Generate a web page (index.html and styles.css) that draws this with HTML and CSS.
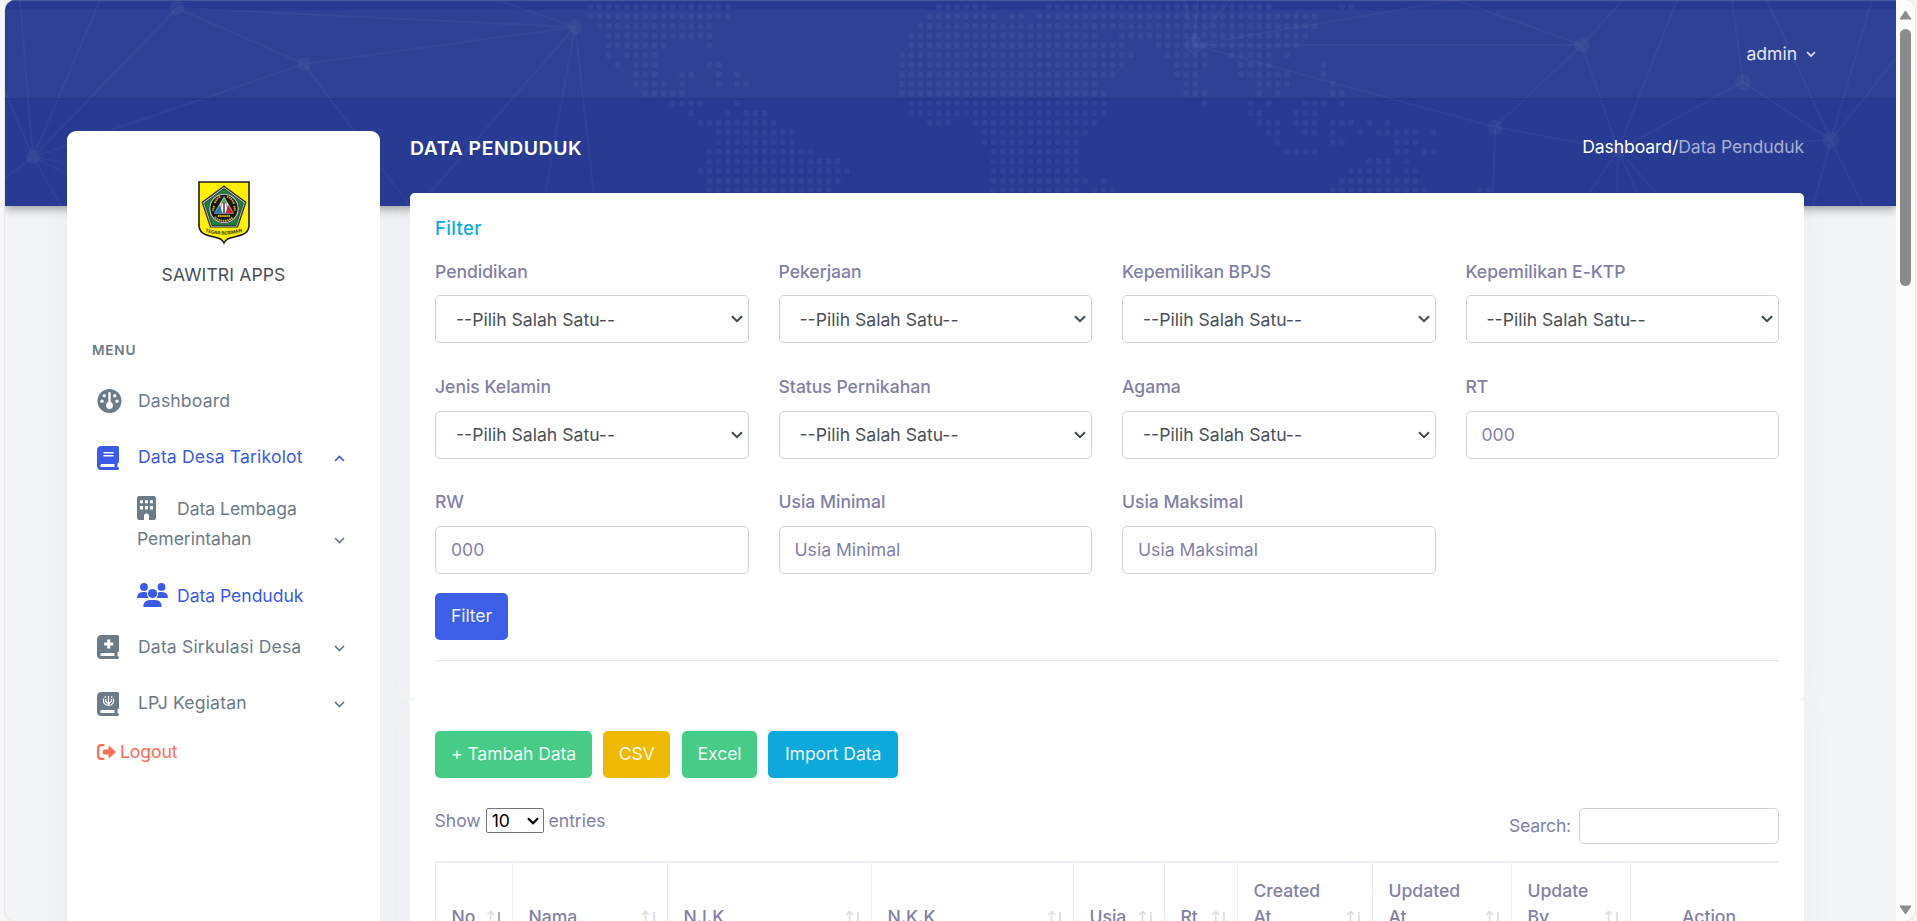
FILE: index.html
```html
<!DOCTYPE html>
<html lang="id">
<head>
<meta charset="utf-8">
<title>Data Penduduk</title>
<link rel="stylesheet" href="styles.css">
</head>
<body>
<div class="window">
<div class="page">
  <div class="banner">
    <svg class="banner-art" width="1891" height="206" viewBox="5 0 1891 206">
      <g class="net">
        <path d="M177 8L304 64L575 27L177 8L33 157L304 64L410 206M20 0L33 157L100 0M5 92L33 157L5 178M33 157L61 206M33 157L100 135M33 157L100 190M33 157L120 172M497 0L575 27L428 195M575 27L545 195M575 27L594 195M1185 0L1194 45L1198 0M1194 45L1230 0M1194 45L1456 0L1582 45H1194L1495 127L1582 45L1623 0M1582 45L1618 150L1495 127L1493 195M1732 0L1743 82L1618 150L1677 0M1743 82L1831 140L1618 150L1588 195M1618 150L1617 195M1618 150L1638 195M1618 150L1658 195M1767 0L1831 140L1872 0M1896 58L1831 140L1813 206M1831 140L1863 206"/>
        <g class="nodes"><circle cx="177" cy="8" r="7.500"/><circle cx="304.500" cy="64" r="7"/><circle cx="575" cy="27" r="7.500"/><circle cx="33" cy="157" r="7"/><circle cx="1194" cy="45" r="9"/><circle cx="1582" cy="45" r="7.500"/><circle cx="1495" cy="127" r="7.500"/><circle cx="1743" cy="82" r="8"/><circle cx="1618" cy="150" r="7"/><circle cx="1831" cy="140" r="8.500"/></g>
      </g>
      <path class="map" transform="translate(590.4 6.700) scale(9.165 9.667)" d="M0 0H15.1M38 0H43.1M50 0H74.1M82 0H83.1M0 1H15.1M37 1H44.1M46 1H47.1M49 1H79.1M1 2H13.1M36 2H79.1M2 3H13.1M35 3H55.1M58 3H78.1M2 4H8.1M13 4h.1M35 4H58.1M62 4H77.1M2 5h.1M4 5H7.1M34 5H59.1M63 5H67.1M70 5H74.1M76 5h.1M3 6h.1M5 6H7.1M13 6H14.1M34 6H58.1M64 6H67.1M71 6H74.1M80 6h.1M5 7H7.1M10 7H11.1M14 7h.1M16 7h.1M34 7H57.1M64 7H66.1M71 7H76.1M80 7h.1M5 8H8.1M10 8h.1M14 8h.1M16 8H17.1M34 8H55.1M65 8H66.1M73 8H76.1M81 8h.1M6 9H10.1M34 9H56.1M65 9H67.1M73 9h.1M75 9h.1M81 9H82.1M9 10H12.1M16 10h.1M35 10H56.1M67 10h.1M72 10h.1M74 10h.1M78 10H80.1M82 10h.1M11 11h.1M15 11h.1M17 11H19.1M35 11H56.1M72 11H73.1M77 11H79.1M12 12H20.1M37 12H39.1M42 12H55.1M73 12H75.1M77 12H79.1M81 12H83.1M85 12h.1M87 12h.1M14 13H22.1M43 13H54.1M74 13H75.1M78 13H79.1M81 13h.1M84 13h.1M86 13H90.1M92 13h.1M14 14H22.1M43 14H53.1M75 14h.1M81 14H82.1M88 14H90.1M13 15H24.1M44 15H53.1M76 15H79.1M88 15H89.1M91 15H92.1M13 16H27.1M44 16H53.1M85 16H87.1M89 16h.1M12 17H28.1M44 17H53.1M83 17H87.1M89 17H90.1M13 18H27.1M44 18H54.1M56 18h.1M82 18H90.1M13 19H26.1M44 19H53.1M55 19H57.1M81 19H91.1M97 19H98.1"/>
    </svg>
  </div>
  <header class="topbar">
    <span class="user">admin</span>
    <svg class="caret" width="10" height="7" viewBox="0 0 10 7"><path d="M1 1L5 5L9 1"/></svg>
  </header>
  <div class="layout">
    <aside class="sidebar">
      <svg class="crest" width="52" height="64" viewBox="0 0 52 64">
        <path d="M1 1H51V44C51 52 45 54 38 55.500C31 57 28 58 26 62C24 58 21 57 14 55.500C7 54 1 52 1 44Z" fill="#fff200" stroke="#1c1c16" stroke-width="1.600"/>
        <path d="M26 4.500L48.500 21L40 46.500H12L3.500 21Z" fill="#222"/>
        <path d="M26 6L47 21.500L39 45.500H13L5 21.500Z" fill="#d8ddd0"/>
        <path d="M26 7.500L45.500 22L38 44.500H14L6.500 22Z" fill="#12883c" stroke="#222" stroke-width=".8"/>
        <circle cx="26" cy="27.500" r="15.200" fill="#ddd" stroke="#222" stroke-width=".7"/>
        <circle cx="26" cy="27.500" r="13.700" fill="#1b1916"/>
        <path d="M17 22C18 18 21 16 23 15.500M29 15.500C32 16.500 35 19 36 23M16 25L15 30M36.500 25L37 30M17 36C22 41 30 41 35 36" fill="none" stroke="#c9b51c" stroke-width="2" stroke-dasharray="1.500 .7"/>
        <path d="M26 15.500L36 32.500H16Z" fill="#ddd"/>
        <path d="M22 24L16.500 32H25Z" fill="#1878b8"/><path d="M30 24L35.500 32H27Z" fill="#cf2430"/>
        <path d="M26 16.500L29 22H23Z" fill="#5aa14a"/>
        <ellipse cx="26" cy="27" rx="3.200" ry="5.500" fill="#fff" stroke="#555" stroke-width=".5"/><path d="M26 22V32" stroke="#111" stroke-width="1.200"/>
        <path d="M20 35H32" stroke="#d8c51c" stroke-width="2.200" stroke-dasharray="1.500 .6"/>
        <path id="motto" d="M7 50.500Q26 57 46 50" fill="none"/>
        <text class="motto"><textPath href="#motto" textLength="38" lengthAdjust="spacingAndGlyphs">TEGAR BERIMAN</textPath></text>
      </svg>
      <div class="brand">SAWITRI APPS</div>
      <div class="menu-title">MENU</div>
      <nav class="menu">
        <a class="item">
          <svg class="ico" width="25" height="24" viewBox="0 0 25 24"><circle cx="12.500" cy="12" r="12" fill="currentColor"/><g fill="#fff"><circle cx="12.500" cy="16.500" r="3.400"/><rect x="11.300" y="3" width="2.400" height="13" rx="1.200"/><circle cx="7.200" cy="6.800" r="1.700"/><circle cx="17.800" cy="6.800" r="1.700"/><circle cx="5" cy="12.200" r="1.700"/><circle cx="20" cy="12.200" r="1.700"/></g></svg>
          <span class="label">Dashboard</span>
        </a>
        <a class="item active">
          <svg class="ico" width="22" height="24" viewBox="0 0 22 24"><path d="M4.500 0H20.500Q22 0 22 1.500V15.500Q22 17 20.500 17.500V21Q22 21 22 22.500Q22 24 20.500 24H4.500Q0 24 0 19.500V4.500Q0 0 4.500 0Z" fill="currentColor"/><path d="M4.800 18H17.500V21H4.800A1.500 1.500 0 0 1 4.800 18Z" fill="#fff"/><path d="M7 6.800H16M7 9.800H16" stroke="#fff" stroke-width="1.500" stroke-linecap="round"/></svg>
          <span class="label">Data Desa Tarikolot</span>
          <svg class="chev" width="11" height="7" viewBox="0 0 11 7"><path d="M1 6L5.500 1.500L10 6"/></svg>
        </a>
        <a class="item sub two">
          <span class="label"><svg class="ico" width="19" height="24" viewBox="0 0 19 24"><path d="M2.200 0H16.800Q19 0 19 2.200V21.800Q19 24 16.800 24H12V20A2.500 2.500 0 0 0 7 20V24H2.200Q0 24 0 21.800V2.200Q0 0 2.200 0Z" fill="currentColor"/><path d="M3 4.300h3v3h-3zM8 4.300h3v3h-3zM13 4.300h3v3h-3zM3 10h3v3.500h-3zM8 10h3v3.500h-3zM13 10h3v3.500h-3z" fill="#fff"/></svg>Data Lembaga<br>Pemerintahan</span>
          <svg class="chev" width="11" height="7" viewBox="0 0 11 7"><path d="M1 1L5.500 5.500L10 1"/></svg>
        </a>
        <a class="item sub active">
          <span class="label"><svg class="ico" width="31" height="24" viewBox="0 0 31 24" fill="currentColor"><circle cx="7" cy="3.900" r="3.900"/><circle cx="24.500" cy="3.900" r="3.900"/><circle cx="15.500" cy="10.500" r="4.600"/><path d="M0 15Q0 9 6 9H8Q9.400 9 10 9.500Q9.500 12.500 11.500 15ZM31 15Q31 9 25 9H23Q21.600 9 21 9.500Q21.500 12.500 19.500 15ZM6.300 24Q6.300 17 13 17H18Q24.700 17 24.700 24Z"/></svg>Data Penduduk</span>
        </a>
        <a class="item">
          <svg class="ico" width="22" height="24" viewBox="0 0 22 24"><path d="M4.500 0H20.500Q22 0 22 1.500V15.500Q22 17 20.500 17.500V21Q22 21 22 22.500Q22 24 20.500 24H4.500Q0 24 0 19.500V4.500Q0 0 4.500 0Z" fill="currentColor"/><path d="M4.800 18H17.500V21H4.800A1.500 1.500 0 0 1 4.800 18Z" fill="#fff"/><path d="M10.200 4.500h3v3h3v3h-3v3h-3v-3h-3v-3h3z" fill="#fff"/></svg>
          <span class="label">Data Sirkulasi Desa</span>
          <svg class="chev" width="11" height="7" viewBox="0 0 11 7"><path d="M1 1L5.500 5.500L10 1"/></svg>
        </a>
        <a class="item">
          <svg class="ico" width="22" height="24" viewBox="0 0 22 24"><path d="M4.500 0H20.500Q22 0 22 1.500V15.500Q22 17 20.500 17.500V21Q22 21 22 22.500Q22 24 20.500 24H4.500Q0 24 0 19.500V4.500Q0 0 4.500 0Z" fill="currentColor"/><path d="M4.800 18H17.500V21H4.800A1.500 1.500 0 0 1 4.800 18Z" fill="#fff"/><path d="M11.500 4V13M8.800 7V9.500L11.500 12L14.200 9.500V7M6.500 6.500V9.500Q7 13 11.500 13.300Q16 13 16.500 9.500V6.500M8.300 4.200V6M14.700 4.200V6" fill="none" stroke="#fff" stroke-width="1.200"/></svg>
          <span class="label">LPJ Kegiatan</span>
          <svg class="chev" width="11" height="7" viewBox="0 0 11 7"><path d="M1 1L5.500 5.500L10 1"/></svg>
        </a>
        <a class="logout">
          <svg width="19" height="16" viewBox="0 0 19 16"><path d="M6.500 1.200H4Q1.200 1.200 1.200 4V12Q1.200 14.800 4 14.800H6.500" fill="none" stroke="currentColor" stroke-width="2.200" stroke-linecap="round"/><path d="M7 5.500H11.500V2.800Q12 2 13 2.600L18.300 7.400Q18.800 8 18.300 8.600L13 13.400Q12 14 11.500 13.200V10.500H7Q6 10.500 6 9.500V6.500Q6 5.500 7 5.500Z" fill="currentColor"/></svg>
          <span>Logout</span>
        </a>
      </nav>
    </aside>
    <main class="main">
      <div class="heading">
        <h1>DATA PENDUDUK</h1>
        <div class="crumbs"><span>Dashboard/</span><span class="current">Data Penduduk</span></div>
      </div>
      <section class="card">
        <h2>Filter</h2>
        <form class="filters">
          <label>Pendidikan<select class="field"><option>--Pilih Salah Satu--</option></select></label>
          <label>Pekerjaan<select class="field"><option>--Pilih Salah Satu--</option></select></label>
          <label>Kepemilikan BPJS<select class="field"><option>--Pilih Salah Satu--</option></select></label>
          <label>Kepemilikan E-KTP<select class="field"><option>--Pilih Salah Satu--</option></select></label>
          <label>Jenis Kelamin<select class="field"><option>--Pilih Salah Satu--</option></select></label>
          <label>Status Pernikahan<select class="field"><option>--Pilih Salah Satu--</option></select></label>
          <label>Agama<select class="field"><option>--Pilih Salah Satu--</option></select></label>
          <label>RT<input class="field" placeholder="000"></label>
          <label>RW<input class="field" placeholder="000"></label>
          <label>Usia Minimal<input class="field" placeholder="Usia Minimal"></label>
          <label>Usia Maksimal<input class="field" placeholder="Usia Maksimal"></label>
        </form>
        <button class="btn primary">Filter</button>
        <hr>
      </section>
      <section class="card data">
        <div class="actions">
          <button class="btn success">+ Tambah Data</button>
          <button class="btn warning">CSV</button>
          <button class="btn success excel">Excel</button>
          <button class="btn info">Import Data</button>
        </div>
        <div class="controls">
          <div class="length">Show <select><option>10</option></select> entries</div>
          <div class="search">Search:<input></div>
        </div>
        <table>
          <colgroup><col class="c-no"><col class="c-nama"><col class="c-nik"><col class="c-nkk"><col class="c-usia"><col class="c-rt"><col class="c-created"><col class="c-updated"><col class="c-by"><col></colgroup>
          <thead><tr>
            <th class="sort asc">No</th><th class="sort">Nama</th><th class="sort">N.I.K</th><th class="sort">N.K.K</th><th class="sort">Usia</th><th class="sort">Rt</th><th class="sort">Created At</th><th class="sort">Updated At</th><th class="sort">Update By</th><th class="center">Action</th>
          </tr></thead>
        </table>
      </section>
    </main>
  </div>
</div>
<div class="scrollbar">
  <svg width="13" height="10" viewBox="0 0 13 10"><path d="M6.500 1L12 9H1Z"/></svg>
  <div class="thumb"></div>
  <svg class="down" width="13" height="10" viewBox="0 0 13 10"><path d="M6.500 9L12 1H1Z"/></svg>
</div>
</div>
</body>
</html>
```
FILE: styles.css
```css
* { box-sizing: border-box; }
body {
  margin: 0;
  background: #f7f7f8;
  font: 400 17.6px/26.4px Inter, "Noto Sans", sans-serif;
  letter-spacing: -.03px;
  color: #8281a5;
  overflow: hidden;
}
.window {
  display: flex;
  height: 921px;
  margin: 0 2px 0 5px;
  border-radius: 10px;
  overflow: hidden;
  box-shadow: 0 0 2px #b9bac0;
}
.page {
  position: relative;
  width: 1891px;
  height: 921px;
  overflow: hidden;
  background: #f3f4f6;
}
.banner {
  position: absolute;
  inset: 0 0 auto 0;
  height: 206px;
  background: #283b92;
  border-top: 1px solid #46569f;
  box-shadow: 0 3px 9px rgba(0, 0, 0, .36);
}
.banner-art { display: block; margin-top: -1px; }
.net { fill: none; stroke: rgba(255, 255, 255, .035); stroke-width: 2; }
.nodes { fill: rgba(255, 255, 255, .04); stroke: none; }
.map { fill: none; stroke: rgba(255, 255, 255, .042); stroke-width: .65; stroke-linecap: round; stroke-dasharray: 0 1; }

.topbar {
  position: relative;
  height: 88px;
  margin-top: 10px;
  padding: 0 80px 0 0;
  display: flex;
  align-items: center;
  justify-content: flex-end;
  gap: 9px;
  background: rgba(255, 255, 255, .035);
  box-shadow: 0 1px 2px rgba(0, 0, 0, .15);
  color: #e4e7f2;
}
.caret, .chev { fill: none; stroke: currentColor; stroke-width: 1.7; }

.layout {
  position: relative;
  display: grid;
  grid-template-columns: 313px 1394px;
  column-gap: 30px;
  padding: 33px 0 0 62px;
}
.sidebar {
  height: 900px;
  background: #fff;
  border-radius: 9px;
  box-shadow: 0 0 36px rgba(80, 90, 150, .05);
  padding-top: 50px;
  color: #6c7b88;
}
.crest { display: block; margin: 0 auto; }
.motto { font: 700 4.5px Inter, sans-serif; fill: #3a3600; }
.brand { margin-top: 17px; text-align: center; color: #495057; letter-spacing: .1px; }
.menu-title { margin: 49px 0 0 25px; font-size: 13.6px; font-weight: 600; letter-spacing: .8px; }
.menu { padding: 9px 35px 0 30px; letter-spacing: .15px; }
.item { display: flex; align-items: center; height: 56.500px; }
.item .ico { flex: none; }
.item > .ico { margin-right: 16px; }
.item > .ico[width="22"] { margin-right: 19px; }
.chev { margin-left: auto; margin-top: 2px; }
.active { color: #3b5ae6; }
.sub { padding-left: 40px; height: 50px; padding-top: 4px; }
.sub .label { line-height: 30px; white-space: nowrap; letter-spacing: -.05px; }
.sub .ico { vertical-align: middle; margin: -5px 9px 0 0; }
.sub.two { height: 83px; padding-top: 0; align-items: flex-end; padding-bottom: 15px; }
.sub.two .ico { margin-right: 21px; }
.sub.two .chev { margin-bottom: 10px; }
.logout { display: flex; align-items: center; gap: 4px; height: 41px; color: #ff6b55; letter-spacing: -.1px; }

.heading { display: flex; justify-content: space-between; height: 62px; padding-top: 3px; }
.crumbs { color: #fff; letter-spacing: -.1px; }
h1 { margin: 1px 0 0; font-size: 19.36px; line-height: 26px; font-weight: 600; color: #fff; letter-spacing: .58px; }
.current { color: #a5aed2; }
.card {
  height: 507px;
  padding: 21px 25px 0;
  background: #fff;
  border-radius: 5px;
  box-shadow: 0 0 36px rgba(80, 90, 150, .05);
}
h2 { margin: 0; font-size: 18.5px; line-height: 28px; font-weight: 500; color: #0dabde; letter-spacing: .35px; }
.filters { display: grid; grid-template-columns: repeat(4, 1fr); column-gap: 30px; margin-top: 17px; grid-auto-rows: 115.200px; height: 334px; }
.filters label { display: block; font-weight: 500; }
.field {
  display: block;
  width: 100%;
  height: 48px;
  margin-top: 10px;
  padding: 0 15px;
  border: 1px solid #ced4da;
  border-radius: 5px;
  background: #fff;
  font: 400 17.6px Inter, sans-serif;
  letter-spacing: 0;
  color: #495057;
}
select.field {
  appearance: none;
  padding: 0 20px;
  background: #fff url("data:image/svg+xml,%3Csvg xmlns='http://www.w3.org/2000/svg' width='12' height='8'%3E%3Cpath d='M1 1.200L6 6.200L11 1.200' fill='none' stroke='%23404850' stroke-width='2'/%3E%3C/svg%3E") no-repeat right 5px center;
}
.field::placeholder { color: #8281a5; opacity: 1; }
.btn {
  height: 47px;
  padding: 0 16px 2px;
  border: 0;
  border-radius: 5px;
  font: 400 17.6px Inter, sans-serif;
  letter-spacing: -.1px;
  color: rgba(255, 255, 255, .93);
}
.primary { background: #3d5fe8; }
.success { background: #47cc87; }
.warning { background: #eeb902; padding-left: 15.500px; padding-right: 15px; }
.excel { margin-left: 1px; padding-left: 16px; padding-right: 16px; }
.info { background: #0ca9dd; padding-left: 16.500px; padding-right: 16.500px; }
hr { margin: 20px 0 0; border: 0; border-top: 1px solid #e3e5e9; }
.data { padding-top: 31px; box-shadow: 0 4px 34px rgba(80, 90, 150, .045); border-radius: 0; clip-path: inset(0 -60px 0 -60px); }
.actions { display: flex; gap: 11px; }
.controls { display: flex; justify-content: space-between; height: 83px; padding-top: 30px; }
.length { margin-left: -.5px; }
.length select {
  appearance: none;
  width: 58px;
  height: 25px;
  padding: 0 5px;
  font: 400 17.6px Inter, sans-serif;
  color: #000;
  border: 1px solid #767676;
  border-radius: 2px;
  background: #fff url("data:image/svg+xml,%3Csvg xmlns='http://www.w3.org/2000/svg' width='12' height='8'%3E%3Cpath d='M1 1.200L6 6.200L11 1.200' fill='none' stroke='%23000' stroke-width='2.200'/%3E%3C/svg%3E") no-repeat right 4px center;
}
.search { display: flex; gap: 8px; align-items: center; height: 36px; letter-spacing: -.2px; }
.search input { width: 200px; height: 36px; border: 1px solid #ced0dc; border-radius: 5px; background: #fff; }
table { width: 1344px; table-layout: fixed; border-collapse: collapse; border-top: 2px solid #edf0f6; }
th { position: relative; height: 79px; padding: 15px 30px 12px 15.500px; border-left: 1px solid #edf0f5; text-align: left; vertical-align: bottom; font-weight: 500; line-height: 26px; }
.center { text-align: center; padding: 15px 12px 12px 20px; }
.sort::before, .sort::after { position: absolute; bottom: 11px; font: 400 18px/26px "DejaVu Sans", sans-serif; color: #dfdee9; }
.sort::before { content: "↑"; right: 14px; }
.sort::after { content: ""; right: 12px; width: 2px; height: 16px; bottom: 14px; background: #dfdee9; }
.asc::after { background: #a9a8c2; }
.c-no { width: 77px; } .c-nama { width: 155px; } .c-nik { width: 204px; } .c-nkk { width: 202px; }
.c-usia { width: 91px; } .c-rt { width: 73px; } .c-created { width: 135px; } .c-updated { width: 139px; } .c-by { width: 119px; }

.scrollbar { width: 19px; display: flex; flex-direction: column; align-items: center; background: #fcfcfc; padding: 10px 0 6px; }
.scrollbar svg { fill: #8b8b8b; stroke: #8b8b8b; stroke-linejoin: round; }
.thumb { width: 11px; height: 257px; margin-top: 9px; border-radius: 6px; background: #8b8b8b; }
.down { margin-top: auto; }
```
